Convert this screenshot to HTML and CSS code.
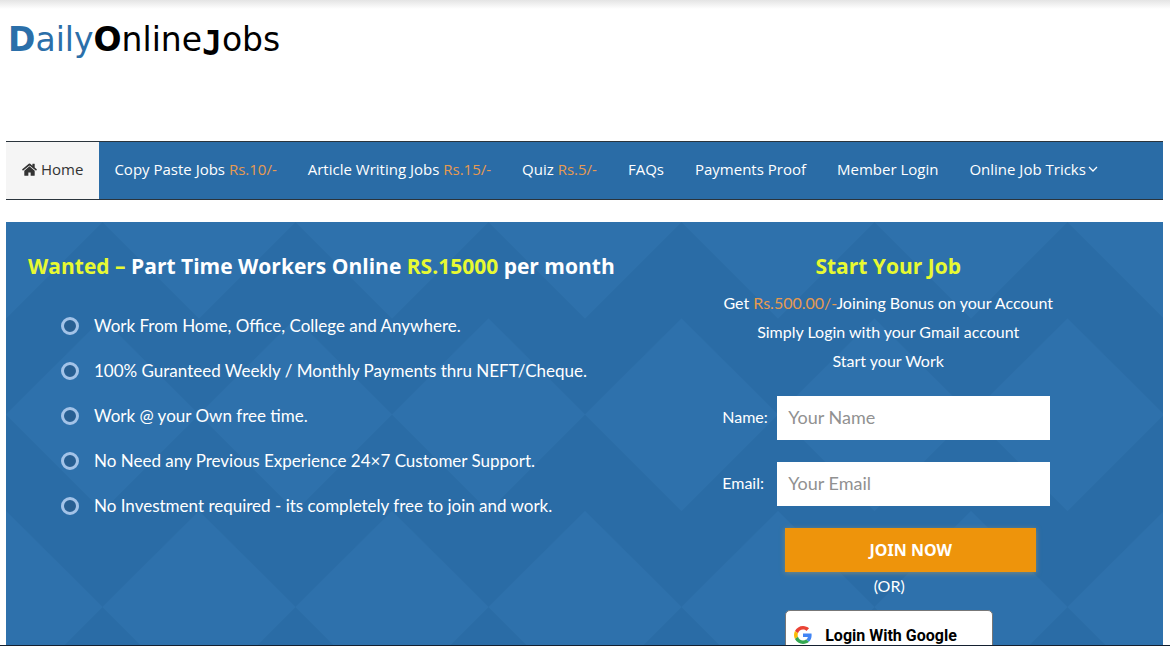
FILE: index.html
```html
<!DOCTYPE html>
<html lang="en">
<head>
<meta charset="utf-8">
<title>Daily Online Jobs</title>
<link rel="stylesheet" href="styles.css">
</head>
<body>
<header class="header">
  <a class="logo" href="#"><span class="logo-blue"><b>D</b>aily</span><b>O</b>nline<b class="logo-j">J</b>obs</a>
</header>
<nav class="nav">
  <a class="nav-item active" href="#"><svg class="home" viewBox="0 0 26 22" aria-hidden="true"><path d="M13 5.500 4 13V21q0 1 1 1h6v-6h4v6h6q1 0 1-1v-8z"/><path d="M25.600 10.600 22 7.600V1.500q0-.500-.500-.500h-3q-.500 0-.500.500v2.800L14.200 1q-1.200-.900-2.400 0L.400 10.600q-.400.400-.100.700l1 1.400q.300.400.800 0L13 4l10.900 8.700q.500.400.800 0l1-1.400q.300-.300-.100-.700z"/></svg>Home</a>
  <a class="nav-item" href="#">Copy Paste Jobs <span class="price">Rs.10/-</span></a>
  <a class="nav-item" href="#">Article Writing Jobs <span class="price">Rs.15/-</span></a>
  <a class="nav-item" href="#">Quiz <span class="price">Rs.5/-</span></a>
  <a class="nav-item" href="#">FAQs</a>
  <a class="nav-item" href="#">Payments Proof</a>
  <a class="nav-item" href="#">Member Login</a>
  <a class="nav-item" href="#">Online Job Tricks<svg class="chevron" viewBox="0 0 10 6" aria-hidden="true"><path d="m1 1 4 4 4-4"/></svg></a>
</nav>
<main class="hero">
  <section class="pitch">
    <h1 class="title"><span class="lime">Wanted –</span> Part Time Workers Online <span class="lime">RS.15000</span> per month</h1>
    <ul class="points">
      <li>Work From Home, Office, College and Anywhere.</li>
      <li>100% Guranteed Weekly / Monthly Payments thru NEFT/Cheque.</li>
      <li>Work @ your Own free time.</li>
      <li>No Need any Previous Experience 24×7 Customer Support.</li>
      <li>No Investment required - its completely free to join and work.</li>
    </ul>
  </section>
  <section class="signup">
    <h2 class="title lime">Start Your Job</h2>
    <p class="intro">Get <span class="price">Rs.500.00/-</span>Joining Bonus on your Account<br>Simply Login with your Gmail account<br>Start your Work</p>
    <form class="form">
      <div class="field"><label for="name">Name:</label><input id="name" type="text" placeholder="Your Name"></div>
      <div class="field"><label for="email">Email:</label><input id="email" type="email" placeholder="Your Email"></div>
      <button class="join" type="submit">JOIN NOW</button>
      <p class="or">(OR)</p>
      <button class="google" type="button"><svg class="g" viewBox="0 0 48 48" aria-hidden="true"><path fill="#ea4335" d="M24 9.500c3.540 0 6.710 1.220 9.210 3.600l6.850-6.850C35.900 2.380 30.470 0 24 0 14.620 0 6.510 5.380 2.560 13.220l7.980 6.190C12.430 13.720 17.740 9.500 24 9.500z"/><path fill="#4285f4" d="M46.980 24.550c0-1.570-.150-3.090-.380-4.550H24v9.020h12.940c-.580 2.960-2.260 5.480-4.780 7.180l7.730 6c4.510-4.180 7.090-10.360 7.090-17.650z"/><path fill="#fbbc05" d="M10.530 28.590c-.480-1.450-.760-2.990-.760-4.590s.270-3.140.760-4.590l-7.980-6.190C.920 16.460 0 20.120 0 24s.920 7.540 2.560 10.780l7.970-6.190z"/><path fill="#34a853" d="M24 48c6.480 0 11.930-2.130 15.890-5.810l-7.730-6c-2.150 1.450-4.920 2.300-8.160 2.300-6.260 0-11.570-4.220-13.470-9.910l-7.980 6.190C6.510 42.620 14.620 48 24 48z"/></svg>Login With Google</button>
    </form>
  </section>
</main>
</body>
</html>
```
FILE: styles.css
```css
* { box-sizing: border-box; }
body {
  margin: 0;
  height: 100vh;
  overflow: hidden;
  padding: 0 7px 0 6px;
  display: flex;
  flex-direction: column;
  border-bottom: 1px solid #142030;
  background: linear-gradient(#e4e4e4, #fff 9px);
  color: #fff;
  font-family: Lato, "Liberation Sans", sans-serif;
}
.header { height: 141px; flex: none; padding: 20px 2px; }
.logo {
  color: #000;
  font: 33px/40px "DejaVu Sans", sans-serif;
  text-decoration: none;
}
.logo-blue { color: #2b6fa9; }
.logo-j { font-family: "DejaVu Sans Mono", monospace; vertical-align: -4px; line-height: 1; }
.nav {
  display: flex;
  flex: none;
  height: 59px;
  margin-bottom: 22px;
  background: #2a6ca6;
  border-top: 1px solid #2a343c;
  border-bottom: 1px solid #2a343c;
}
.nav-item {
  display: flex;
  align-items: center;
  padding: 0 16px 3px 15px;
  white-space: pre;
  color: #fff;
  text-decoration: none;
  font: 15px/20px "Open Sans", "Noto Sans", sans-serif;
}
.nav-item.active { padding-left: 16px; background: #f5f5f5; color: #333; }
.home { width: 15px; height: 13px; margin-right: 4px; fill: #333; }
.chevron { width: 10px; height: 6px; margin-left: 2px; fill: none; stroke: #fff; stroke-width: 1.3; }
.price { color: #e69a50; }
.hero {
  flex: 1 0 auto;
  display: flex;
  background: #2a6ca6 url("data:image/svg+xml,%3Csvg xmlns='http://www.w3.org/2000/svg' width='193' height='385' viewBox='0 0 193 385'%3E%3Cpath fill='%232e71ac' d='M0 0H193L96.500 0 0 96.500zM193 0V96.500L96.500 0zM96.500 96.500 193 192.500 96.500 289 0 192.500zM0 289 96.500 385H0zM193 289V385H96.500z'/%3E%3C/svg%3E");
}
.pitch { width: 55%; padding: 28px 22px; }
.title {
  margin: 0;
  font: bold 21px/32px "Open Sans", "Noto Sans", sans-serif;
  white-space: nowrap;
}
.lime { color: #e7f932; }
.points {
  margin: 21px 0 0;
  padding: 0 0 0 33px;
  list-style: none;
  font-size: 17px;
  line-height: 45px;
  white-space: nowrap;
}
.points li { display: flex; align-items: center; gap: 15px; }
.points li::before {
  content: "";
  box-sizing: border-box;
  width: 18px;
  height: 18px;
  border: 3px solid #a3c3e8;
  border-radius: 50%;
  background: #285f92;
}
.signup { width: 42.5%; padding: 28px 0 0; text-align: center; }
.intro { margin: 6px 0 0; font-size: 16px; line-height: 29px; }
.form {
  width: 332px;
  margin: 21px auto 0;
  padding-right: 4px;
  display: flex;
  flex-direction: column;
  align-items: flex-start;
}
.field { display: flex; align-items: center; width: 100%; margin-bottom: 22px; }
.field label { width: 55px; padding-bottom: 4px; text-align: left; font-size: 16px; }
.field input {
  flex: 1;
  min-width: 0;
  height: 44px;
  padding: 0 11px 2px;
  border: 0;
  background: #fff;
  font: 18px Lato, sans-serif;
}
.field input::placeholder { color: #919191; }
.join {
  width: 251px;
  height: 44px;
  margin-left: 63px;
  border: 0;
  background: #ee940b;
  box-shadow: 0 1px 5px #7e8a78;
  color: #fff;
  font: bold 16px "Noto Sans", "Open Sans", sans-serif;
}
.or { width: 100%; margin: 0; padding: 0 0 10px 6px; font-size: 16px; line-height: 28px; }
.google {
  display: flex;
  align-items: center;
  gap: 13px;
  width: 208px;
  height: 50px;
  margin-left: 63px;
  padding: 0 8px;
  border: 1px solid #777;
  border-radius: 5px;
  background: #fff;
  color: #000;
  font: bold 16px Roboto, sans-serif;
  white-space: nowrap;
}
.g { width: 18px; height: 18px; }
```
